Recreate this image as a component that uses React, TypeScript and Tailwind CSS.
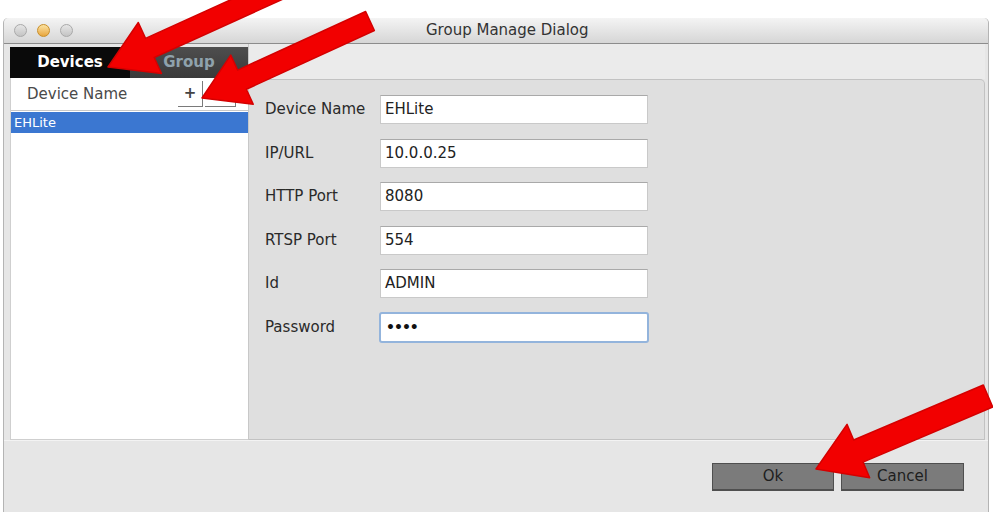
import React from "react";

type Arrow = { tail: [number, number]; tip: [number, number]; shaft: number; head: number; headLen: number };

const arrows: Arrow[] = [
  { tail: [282, -12], tip: [108, 67], shaft: 21, head: 56, headLen: 46 },
  { tail: [370, 21], tip: [202, 98], shaft: 21, head: 54, headLen: 44 },
  { tail: [988, 396], tip: [816, 469], shaft: 24, head: 58, headLen: 46 },
];

const arrowPoints = ({ tail, tip, shaft, head, headLen }: Arrow) => {
  const dx = tip[0] - tail[0];
  const dy = tip[1] - tail[1];
  const len = Math.hypot(dx, dy);
  const ux = dx / len;
  const uy = dy / len;
  const nx = -uy;
  const ny = ux;
  const bx = tip[0] - ux * headLen;
  const by = tip[1] - uy * headLen;
  const pts = [
    [tail[0] + (nx * shaft) / 2, tail[1] + (ny * shaft) / 2],
    [bx + (nx * shaft) / 2, by + (ny * shaft) / 2],
    [bx + (nx * head) / 2, by + (ny * head) / 2],
    [tip[0], tip[1]],
    [bx - (nx * head) / 2, by - (ny * head) / 2],
    [bx - (nx * shaft) / 2, by - (ny * shaft) / 2],
    [tail[0] - (nx * shaft) / 2, tail[1] - (ny * shaft) / 2],
  ];
  return pts.map((p) => p.join(",")).join(" ");
};

const fields = [
  { label: "Device Name", value: "EHLite" },
  { label: "IP/URL", value: "10.0.0.25" },
  { label: "HTTP Port", value: "8080" },
  { label: "RTSP Port", value: "554" },
  { label: "Id", value: "ADMIN" },
];

const App = () => {
  return (
    <div className="relative w-[993px] h-[512px] overflow-hidden bg-white font-['DejaVu_Sans',sans-serif]">
      <div className="h-[18px] bg-white" />
      <div className="ml-[3px] mr-[4px] h-[494px] flex flex-col bg-[#e6e6e6] border-l border-r border-[#b4b4b4] rounded-t-[5px]">
        {/* title bar */}
        <div className="h-[26px] flex items-center px-[10px] bg-gradient-to-b from-[#f4f4f4] to-[#d6d6d6] border-b border-[#8c8c8c] rounded-t-[5px]">
          <div className="w-[60px] flex gap-[10px]">
            <div className="w-[13px] h-[13px] rounded-full border border-[#a9a9a9] bg-gradient-to-b from-[#e6e6e6] to-[#c4c4c4]" />
            <div className="w-[13px] h-[13px] rounded-full border border-[#c98f2a] bg-gradient-to-b from-[#fbe3a0] to-[#e8a63a]" />
            <div className="w-[13px] h-[13px] rounded-full border border-[#a9a9a9] bg-gradient-to-b from-[#e6e6e6] to-[#c4c4c4]" />
          </div>
          <span className="ml-[352px] text-[15px] text-[#333]">Group Manage Dialog</span>
        </div>

        {/* main */}
        <div className="h-[396px] flex pl-[6px] pr-[3px]">
          <div className="w-[238px] flex flex-col pt-[3px]">
            <div className="h-[31px] flex bg-[#0a0a0a]">
              <div className="w-[120px] flex items-center justify-center text-[15px] font-bold text-white">Devices</div>
              <div className="flex-1 flex items-center justify-center text-[15px] font-bold text-[#8fa2ac] bg-gradient-to-b from-[#4e4e4e] to-[#3a3a3a]">
                Group
              </div>
            </div>
            <div className="flex-1 flex flex-col bg-white border-l border-b border-[#cfcfcf]">
              <div className="h-[33px] flex items-center pl-[16px] pr-[12px] border-b border-[#c8c8c8]">
                <span className="text-[15px] text-[#4a4a4a]">Device Name</span>
                <div className="ml-auto flex gap-[2px]">
                  <div className="w-[25px] h-[26px] flex items-center justify-center border-r border-b border-[#7a7a7a] text-[15px] font-bold text-[#444]">
                    +
                  </div>
                  <div className="w-[31px] h-[26px] flex items-center justify-center border-r border-b border-[#7a7a7a] text-[15px] text-[#b0b0b0]">
                    –
                  </div>
                </div>
              </div>
              <div className="h-[21px] mt-[1px] flex items-center pl-[3px] bg-[#3b77d1] text-[13px] text-white">EHLite</div>
            </div>
          </div>

          <div className="flex-1 flex flex-col border-l border-[#c8c8c8]">
            <div className="h-[35px] bg-[#ebebeb]" />
            <div className="flex-1 flex flex-col gap-[14.5px] pl-[16px] pt-[15px] bg-[#dfdfdf] border-t border-r border-b border-[#c2c2c2] rounded-tr-[5px]">
              {fields.map((f) => (
                <div key={f.label} className="flex items-center h-[29px]">
                  <span className="w-[115px] text-[15px] text-[#2a2a2a]">{f.label}</span>
                  <div className="w-[268px] h-[29px] flex items-center pl-[4px] bg-white border border-[#c9c9c9] border-t-[#a9a9a9] text-[15px] text-[#222]">
                    {f.value}
                  </div>
                </div>
              ))}
              <div className="flex items-center h-[29px]">
                <span className="w-[115px] text-[15px] text-[#2a2a2a]">Password</span>
                <div className="w-[270px] h-[31px] -ml-[1px] flex items-center pl-[5px] bg-white border-2 border-[#93b4dc] rounded-[3px] text-[14px] font-bold tracking-[-1px] text-[#111]">
                  ••••
                </div>
              </div>
            </div>
          </div>
        </div>

        {/* footer */}
        <div className="flex-1 flex justify-end gap-[7px] pt-[22px] pr-[24px] border-t border-[#f3f3f3]">
          <div className="w-[122px] h-[28px] flex items-center justify-center bg-[#7b7b7b] border border-[#4f4f4f] border-b-2 text-[15px] text-[#1e1e1e]">
            Ok
          </div>
          <div className="w-[123px] h-[28px] flex items-center justify-center bg-[#7b7b7b] border border-[#4f4f4f] border-b-2 text-[15px] text-[#1e1e1e]">
            Cancel
          </div>
        </div>
      </div>

      {/* red annotation arrows */}
      <svg className="absolute inset-0 pointer-events-none" width="993" height="512" viewBox="0 0 993 512">
        {arrows.map((a, i) => (
          <polygon key={i} points={arrowPoints(a)} fill="#f20000" stroke="#d40000" strokeWidth="1.5" strokeLinejoin="round" />
        ))}
      </svg>
    </div>
  );
};

export default App;
